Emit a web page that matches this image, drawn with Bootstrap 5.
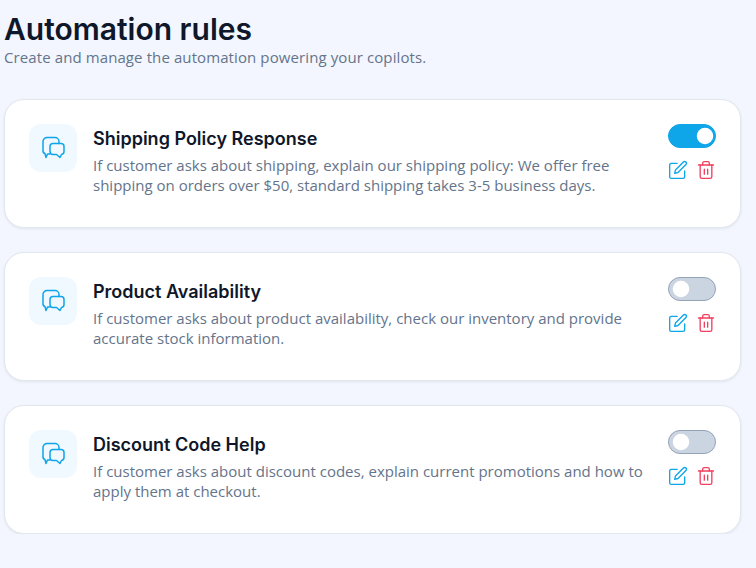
<!DOCTYPE html>
<html lang="en">
<head>
  <meta charset="UTF-8">
  <meta name="viewport" content="width=device-width, initial-scale=1.0">
  <title>Automation rules</title>
  <link href="https://cdn.jsdelivr.net/npm/bootstrap@5.3.0/dist/css/bootstrap.min.css" rel="stylesheet">
  <style>
    body { background: #f3f6fe; font-family: "Open Sans", sans-serif; padding: 9px 15px 0 4px; }
    .page-title { font-family: Inter, sans-serif; font-weight: 600; font-size: 30px; line-height: 40px; color: #0f172a; margin: 0; }
    .page-sub { font-size: 15px; line-height: 20px; letter-spacing: .1px; color: #64748b; margin: -2px 0 32px 0; }
    .rule-list { gap: 24px; }
    .rule-card { background: #fff; border: 1px solid #e2e8f0; border-radius: 20px; box-shadow: 0 1px 3px rgba(15, 23, 42, .08); padding: 24px; height: 129px; }
    .rule-icon { width: 48px; height: 48px; border-radius: 12px; background: #f0f9ff; color: #0ea5e9; }
    .rule-title { font-family: Inter, sans-serif; font-weight: 600; font-size: 18px; line-height: 28px; color: #0f172a; margin: 1px 0 2px; }
    .rule-text { font-size: 15px; line-height: 20px; color: #64748b; margin: 0; }
    .rule-side { gap: 12px; }
    .form-switch .rule-toggle { width: 48px; height: 24px; margin: 0; float: none; display: block; background-color: #cbd5e1; border: 1px solid #94a3b8; box-shadow: none; background-position: 1px center; background-image: url("data:image/svg+xml,%3csvg xmlns='http://www.w3.org/2000/svg' viewBox='-4 -4 8 8'%3e%3ccircle r='3' fill='%23fff'/%3e%3c/svg%3e"); }
    .form-switch .rule-toggle:checked { background-color: #0ea5e9; border-color: #0ea5e9; background-position: right -1px center; }
    .rule-btn { color: #0ea5e9; line-height: 0; }
    .rule-btn.del { color: #f43f5e; }
  </style>
</head>
<body>
  <svg width="0" height="0" class="d-none">
    <symbol id="i-chat" viewBox="0 0 24 24" fill="none" stroke="currentColor" stroke-width="1.5" stroke-linecap="round" stroke-linejoin="round">
      <path d="M9 18H6.500L5 21.500 4 17.700A3.500 3.500 0 0 1 2 14V5.500A4 4 0 0 1 6 1.500H14A4 4 0 0 1 18 5.500V7.500"/>
      <path d="M12 7.500H20a3 3 0 0 1 3 3V15.500a3 3 0 0 1-2.500 3L19 21.500 15.500 18.500H12a3 3 0 0 1-3-3V10.500a3 3 0 0 1 3-3z"/>
    </symbol>
    <symbol id="i-edit" viewBox="0 0 24 24" fill="none" stroke="currentColor" stroke-width="1.6" stroke-linecap="round" stroke-linejoin="round">
      <path d="M11 4H4a2 2 0 0 0-2 2v14a2 2 0 0 0 2 2h14a2 2 0 0 0 2-2v-7"/>
      <path d="M18.500 2.500a2.120 2.120 0 0 1 3 3L12 15l-4 1 1-4 9.500-9.500z"/>
    </symbol>
    <symbol id="i-trash" viewBox="0 0 24 24" fill="none" stroke="currentColor" stroke-width="1.6" stroke-linecap="round" stroke-linejoin="round">
      <path d="M3 6h18"/>
      <path d="M19 6v14a2 2 0 0 1-2 2H7a2 2 0 0 1-2-2V6"/>
      <path d="M8 6V4a2 2 0 0 1 2-2h4a2 2 0 0 1 2 2v2"/>
      <path d="M10 11v6M14 11v6"/>
    </symbol>
  </svg>

  <h1 class="page-title">Automation rules</h1>
  <p class="page-sub">Create and manage the automation powering your copilots.</p>

  <div class="rule-list d-flex flex-column">
    <div class="rule-card d-flex gap-3">
      <div class="rule-icon d-flex align-items-center justify-content-center flex-shrink-0">
        <svg width="24" height="24"><use href="#i-chat"/></svg>
      </div>
      <div class="flex-grow-1">
        <h2 class="rule-title">Shipping Policy Response</h2>
        <p class="rule-text">If customer asks about shipping, explain our shipping policy: We offer free shipping on orders over $50, standard shipping takes 3-5 business days.</p>
      </div>
      <div class="rule-side d-flex flex-column align-items-end flex-shrink-0">
        <div class="form-check form-switch p-0 m-0"><input class="form-check-input rule-toggle" type="checkbox" role="switch" checked></div>
        <div class="d-flex gap-2">
          <a class="rule-btn" href="#"><svg width="20" height="20"><use href="#i-edit"/></svg></a>
          <a class="rule-btn del" href="#"><svg width="20" height="20"><use href="#i-trash"/></svg></a>
        </div>
      </div>
    </div>

    <div class="rule-card d-flex gap-3">
      <div class="rule-icon d-flex align-items-center justify-content-center flex-shrink-0">
        <svg width="24" height="24"><use href="#i-chat"/></svg>
      </div>
      <div class="flex-grow-1">
        <h2 class="rule-title">Product Availability</h2>
        <p class="rule-text">If customer asks about product availability, check our inventory and provide accurate stock information.</p>
      </div>
      <div class="rule-side d-flex flex-column align-items-end flex-shrink-0">
        <div class="form-check form-switch p-0 m-0"><input class="form-check-input rule-toggle" type="checkbox" role="switch"></div>
        <div class="d-flex gap-2">
          <a class="rule-btn" href="#"><svg width="20" height="20"><use href="#i-edit"/></svg></a>
          <a class="rule-btn del" href="#"><svg width="20" height="20"><use href="#i-trash"/></svg></a>
        </div>
      </div>
    </div>

    <div class="rule-card d-flex gap-3">
      <div class="rule-icon d-flex align-items-center justify-content-center flex-shrink-0">
        <svg width="24" height="24"><use href="#i-chat"/></svg>
      </div>
      <div class="flex-grow-1">
        <h2 class="rule-title">Discount Code Help</h2>
        <p class="rule-text">If customer asks about discount codes, explain current promotions and how to apply them at checkout.</p>
      </div>
      <div class="rule-side d-flex flex-column align-items-end flex-shrink-0">
        <div class="form-check form-switch p-0 m-0"><input class="form-check-input rule-toggle" type="checkbox" role="switch"></div>
        <div class="d-flex gap-2">
          <a class="rule-btn" href="#"><svg width="20" height="20"><use href="#i-edit"/></svg></a>
          <a class="rule-btn del" href="#"><svg width="20" height="20"><use href="#i-trash"/></svg></a>
        </div>
      </div>
    </div>
  </div>

  <script src="https://cdn.jsdelivr.net/npm/bootstrap@5.3.0/dist/js/bootstrap.bundle.min.js"></script>
</body>
</html>
